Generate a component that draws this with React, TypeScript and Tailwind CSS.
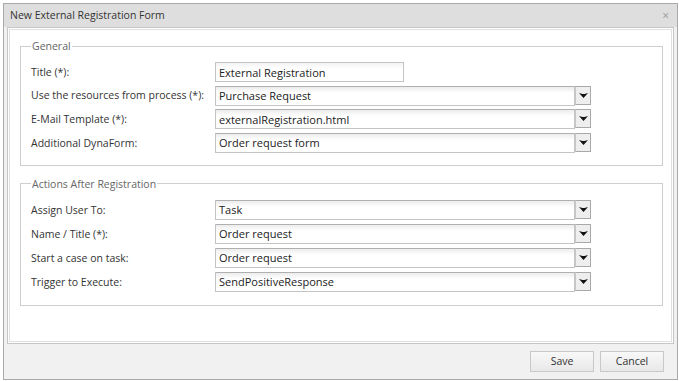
import React from "react";

const font = { fontFamily: '"Open Sans", "Liberation Sans", sans-serif' };

function Arrow() {
  return (
    <svg width="9" height="5" viewBox="0 0 9 5">
      <polygon points="0,0 3.5,1 5.5,1 9,0 4.5,5" fill="#111" />
    </svg>
  );
}

function SelectBox({ value }: { value: string }) {
  return (
    <div className="flex h-[20px] w-[376px]">
      <div className="flex-1 h-[20px] border border-[#c4c4c4] border-t-[#b0b0b0] bg-[linear-gradient(#ececec,#ffffff_6px)] flex items-center pl-[3px] text-[11px] text-[#222] leading-none">
        {value}
      </div>
      <div className="w-[16px] h-[19px] border border-[#a9a9a9] border-l-[#c8c8c8] bg-[#eeeeee] flex items-center justify-center">
        <Arrow />
      </div>
    </div>
  );
}

function TextBox({ value }: { value: string }) {
  return (
    <div className="h-[20px] w-[189px] border border-[#c4c4c4] bg-[linear-gradient(#f3f3f3,#ffffff_6px)] flex items-center pl-[3px] text-[11px] text-[#222] leading-none">
      {value}
    </div>
  );
}

function Row({ label, children }: { label: string; children: React.ReactNode }) {
  return (
    <div className="flex items-center h-[20px]">
      <div className="w-[184px] text-[10.5px] text-[#333] leading-none">{label}</div>
      {children}
    </div>
  );
}

function Group({ title, children, className }: { title: string; children: React.ReactNode; className?: string }) {
  return (
    <fieldset className={"border border-[#cfcfcf] ml-[10px] mr-[8px] pl-[10px] " + (className ?? "")}>
      <legend className="px-[1px] text-[10.5px] text-[#666] leading-[16px]">{title}</legend>
      {children}
    </fieldset>
  );
}

export default function App() {
  return (
    <div style={font} className="w-[679px] h-[381px] bg-white pt-[3px] pl-[3px]">
      <div className="w-[675px] h-[377px] border border-[#a9a9a9] bg-[#f1f1f1] flex flex-col">
        <div className="h-[23px] bg-[#dedede] flex items-center justify-between pl-[6px] pr-[8px]">
          <span className="text-[10.5px] text-[#333] leading-none">New External Registration Form</span>
          <span className="text-[12px] text-[#999] leading-none">×</span>
        </div>
        <div className="ml-[3px] mr-[3px] h-[317px] border border-[#c6c6c6] bg-white p-[1px]">
          <div className="h-full border border-[#e0e0e0] bg-white pt-[8px]">
            <Group title="General" className="pb-[12px]">
              <div className="flex flex-col gap-[3.6px] pt-[8px]">
                <Row label="Title (*):"><TextBox value="External Registration" /></Row>
                <Row label="Use the resources from process (*):"><SelectBox value="Purchase Request" /></Row>
                <Row label="E-Mail Template (*):"><SelectBox value="externalRegistration.html" /></Row>
                <Row label="Additional DynaForm:"><SelectBox value="Order request form" /></Row>
              </div>
            </Group>
            <Group title="Actions After Registration" className="mt-[10px] pb-[13px]">
              <div className="flex flex-col gap-[4px] pt-[8px]">
                <Row label="Assign User To:"><SelectBox value="Task" /></Row>
                <Row label="Name / Title (*):"><SelectBox value="Order request" /></Row>
                <Row label="Start a case on task:"><SelectBox value="Order request" /></Row>
                <Row label="Trigger to Execute:"><SelectBox value="SendPositiveResponse" /></Row>
              </div>
            </Group>
          </div>
        </div>
        <div className="flex justify-end gap-[6px] pr-[13px] pt-[7px]">
          <button className="w-[64px] h-[21px] border border-[#c8c8c8] bg-[linear-gradient(#f8f8f8,#e8e8e8)] text-[10.5px] text-[#333] leading-none">Save</button>
          <button className="w-[64px] h-[21px] border border-[#c8c8c8] bg-[linear-gradient(#f8f8f8,#e8e8e8)] text-[10.5px] text-[#333] leading-none">Cancel</button>
        </div>
      </div>
    </div>
  );
}
